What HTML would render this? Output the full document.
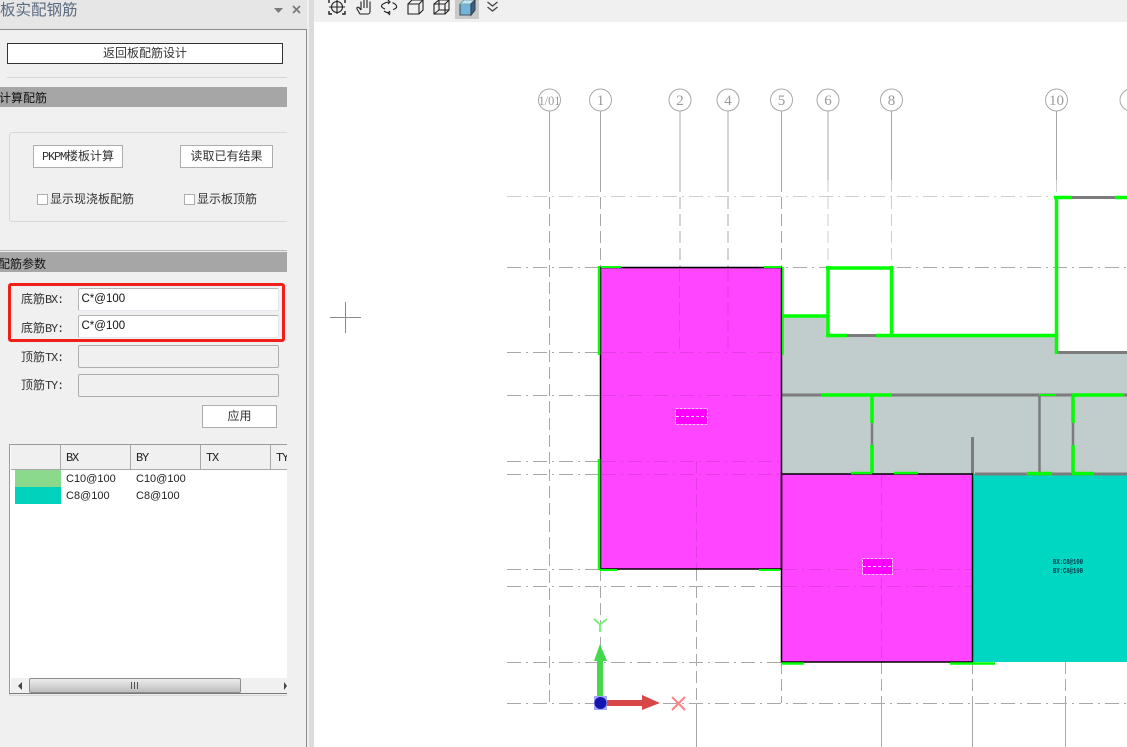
<!DOCTYPE html>
<html><head><meta charset="utf-8">
<style>
html,body{margin:0;padding:0;width:1127px;height:747px;overflow:hidden;background:#fff}
body{position:relative;font-family:"Liberation Sans","Noto Sans CJK SC",sans-serif;font-size:12px;color:#333}
.a{position:absolute;box-sizing:border-box}
.m{font-family:"Liberation Mono",monospace;font-size:12px;letter-spacing:-1.2px}
.t{white-space:nowrap;line-height:16px}
.btn{background:#fff;border:1px solid #adadad;text-align:center;white-space:nowrap}
.bar{left:0;width:287px;height:20px;background:#a6a6a6;color:#111;line-height:22px;white-space:nowrap;overflow:hidden}
.inp{left:78px;width:201px;height:23px;border:1px solid #b5b5b5;border-bottom-color:#e2e6ee;border-right-color:#e2e6ee;border-radius:2px;background:#fff;font-size:11.5px;line-height:20px;padding-left:2.500px;color:#111}
.dis{background:#f0f0f0;border:1px solid #adadad;border-radius:2px}
.cb{width:11px;height:11px;border:1px solid #adadad;background:#fff}
.th{top:445px;height:24px;line-height:27px;border-right:1px solid #a8a8a8;padding-left:5px;color:#222}
.td{font-size:11px;color:#222;white-space:nowrap;line-height:16px}
</style></head><body>

<div class="a" style="left:0;top:0;width:307px;height:747px;background:#f0f0f0"></div>
<div class="a" style="left:0;top:0;width:307px;height:29px;background:#e6e6e6"></div>
<div class="a" style="left:0;top:29px;width:307px;height:1px;background:#8c8c8c"></div>
<div class="a" style="left:306px;top:29px;width:1px;height:718px;background:#8c8c8c"></div>
<div class="a" style="left:307px;top:0;width:2px;height:747px;background:#f0f0f0"></div>
<div class="a" style="left:309px;top:0;width:5px;height:747px;background:#dcdcdc"></div>
<div class="a t" style="left:0;top:1px;font-size:15.500px;line-height:20px;color:#5a6b80">板实配钢筋</div>
<svg class="a" style="left:270px;top:3px" width="36" height="14">
<path d="M4 5h9l-4.500 5z" fill="#7a7a7a"/>
<path d="M23 3l7 7M30 3l-7 7" stroke="#777" stroke-width="1.600" fill="none"/>
</svg>

<div class="a" style="left:7px;top:43px;width:276px;height:21px;background:#fff;border:1px solid #333;text-align:center;line-height:19px;color:#333">返回板配筋设计</div>
<div class="a" style="left:7px;top:77px;width:280px;height:1px;background:#d6d6d6"></div>
<div class="a bar" style="top:87px;text-indent:-1px">计算配筋</div>

<div class="a" style="left:9px;top:132px;width:278px;height:90px;border:1px solid #d8d8d8;border-right:none;border-radius:3px 0 0 3px"></div>
<div class="a btn" style="left:33px;top:145px;width:90px;height:23px;line-height:20px"><span class="m">PKPM</span>楼板计算</div>
<div class="a btn" style="left:180px;top:145px;width:93px;height:23px;line-height:20px">读取已有结果</div>
<div class="a cb" style="left:37px;top:194px"></div>
<div class="a t" style="left:50px;top:191px">显示现浇板配筋</div>
<div class="a cb" style="left:184px;top:194px"></div>
<div class="a t" style="left:197px;top:191px">显示板顶筋</div>

<div class="a" style="left:0;top:250px;width:287px;height:1px;background:#b8b8b8"></div>
<div class="a bar" style="top:252px;text-indent:-2px;line-height:24px">配筋参数</div>

<div class="a t" style="left:21px;top:291px">底筋<span class="m">BX:</span></div>
<div class="a inp" style="top:288px">C*@100</div>
<div class="a t" style="left:21px;top:320px">底筋<span class="m">BY:</span></div>
<div class="a inp" style="top:315px">C*@100</div>
<div class="a" style="left:8px;top:283px;width:277px;height:59px;border:3px solid #f11f1a;border-radius:3px"></div>
<div class="a t" style="left:21px;top:349px">顶筋<span class="m">TX:</span></div>
<div class="a dis" style="left:78px;top:345px;width:201px;height:23px"></div>
<div class="a t" style="left:21px;top:377px">顶筋<span class="m">TY:</span></div>
<div class="a dis" style="left:78px;top:374px;width:201px;height:23px"></div>
<div class="a btn" style="left:202px;top:405px;width:75px;height:23px;line-height:20px">应用</div>

<!-- table -->
<div class="a" style="left:9px;top:444px;width:278px;height:250px;background:#fff;border:1px solid #9a9a9a;border-right:none;border-bottom:1px solid #777;overflow:hidden"></div>
<div class="a" style="left:9px;top:694px;width:278px;height:2px;border-bottom:1px solid #d8d8d8;border-left:1px solid #d8d8d8;border-radius:0 0 0 3px"></div>
<div class="a" style="left:11px;top:445px;width:276px;height:24px;background:#f0f0f0"></div>
<div class="a" style="left:11px;top:469px;width:276px;height:1px;background:#a8a8a8"></div>
<div class="a th" style="left:11px;width:50px"></div>
<div class="a th m" style="left:61px;width:70px">BX</div>
<div class="a th m" style="left:131px;width:70px">BY</div>
<div class="a th m" style="left:201px;width:70px">TX</div>
<div class="a m" style="left:276px;top:445px;line-height:27px;color:#222;width:11px;overflow:hidden">TY</div>
<div class="a" style="left:15px;top:470px;width:46px;height:17px;background:#8bd98d"></div>
<div class="a" style="left:15px;top:487px;width:46px;height:17px;background:#00d2bc"></div>
<div class="a td" style="left:66px;top:471px">C10@100</div>
<div class="a td" style="left:136px;top:471px">C10@100</div>
<div class="a td" style="left:66px;top:488px">C8@100</div>
<div class="a td" style="left:136px;top:488px">C8@100</div>
<!-- scrollbar -->
<div class="a" style="left:11px;top:678px;width:276px;height:15px;background:#f0f0f0"></div>
<div class="a" style="left:29px;top:678px;width:212px;height:15px;border:1px solid #8f8f8f;border-radius:2px;background:linear-gradient(#ececec,#d8d8d8 45%,#bdbdbd)"></div>
<svg class="a" style="left:11px;top:678px" width="276" height="15">
<path d="M7 8l4-4v8z" fill="#444"/>
<path d="M273 4l3 4-3 4z" fill="#444"/>
<path d="M120.500 4v7M123.500 4v7M126.500 4v7" stroke="#555" stroke-width="1" fill="none"/>
</svg>

<!-- toolbar -->
<div class="a" style="left:314px;top:0;width:813px;height:22px;background:#f0f0f0"></div>
<div class="a" style="left:455px;top:0;width:24px;height:19px;background:#c9c9c9"></div>
<svg class="a" style="left:314px;top:0" width="200" height="22" fill="none" stroke="#222" stroke-width="1.100">
<!-- fit -->
<circle cx="23" cy="7" r="5.500"/><path d="M23 0v14M15 7h16"/>
<path d="M15 3V0M31 3V0M15 11v3h3M31 11v3h-3" stroke-width="1.400"/>
<!-- hand -->
<path d="M43 9l3 5h8c1 0 2-1 2-2.500V3M47 10V1.500M50 8V0M53 8V0M56 8V1.500M47 10l-2-2.500c-1-.8-2.500-.2-2 1.500"/>
<!-- rotate -->
<path d="M71 9c-4-1.500-5-3.500-1-5.500 1.500-1 3.500-1.500 5-1.500M79 9.500c4-1 4.500-3 2.500-5-1-1-2-1.500-3-1.800M70 11c2 1.500 4 2 6.500 2M74 0l2 2-2 2M76 11l-2 2 2 2"/>
<!-- cube -->
<path d="M94 4h11v10H94zM94 4l4-4h11v10l-4 4M105 4l4-4"/>
<!-- wire -->
<path d="M120 4h11v10h-11zM120 4l5-4h10v10l-4 4M131 4l4-4M125 0v10h10M125 10l-5 4"/>
<!-- shaded -->
<path d="M146 4h11v11h-11z" fill="#74b4d8" stroke="#456"/>
<path d="M146 4l4-4h11l-4 4z" fill="#c6e6f4" stroke="#7aa"/>
<path d="M157 4l4-4v10l-4 5z" fill="#3a5f80" stroke="#345"/>
<!-- chevrons -->
<path d="M173.500 2l5 4 5-4M173.500 7l5 4 5-4" stroke="#444" stroke-width="1.300"/>
</svg>

<!-- canvas -->
<svg class="a" style="left:314px;top:22px;overflow:hidden" width="813" height="725" viewBox="314 22 813 725">
<g stroke="#a8a8a8" stroke-width="1" fill="none">
  <path stroke="#cfcfcf" stroke-dasharray="14 5 2 5" d="M507 196.500H1127"/>
  <g stroke-dasharray="14 5 2 5">
    <path d="M507 267.500H1127M507 352.500H600M507 395.500H600M507 461.500H600M507 474.500H600M507 569.500H600M507 586.500H781M507 662.500H781M507 703.500H1127"/>
  </g>
  <path d="M549.500 111V180M600.500 111V180M680 111V180M728 111V180M781.500 111V180M828 111V180M891.500 111V180M1056.500 111V180"/>
  <g stroke-dasharray="12 5">
    <path d="M549.500 180V703M600.500 180V267M600.500 569V703M680 180V267M728 180V267M781.500 180V267M781.500 662V703M696.500 569V703"/>
    <path stroke="#cfcfcf" d="M828 180V267M891.500 180V267M1056.500 180V197"/>
    <path d="M881.500 662V703M972.500 662V703M1065.500 662V703"/>
  </g>
  <path d="M696.500 703V747M881.500 703V747M972.500 703V747M1065.500 703V747"/>
  <g>
    <circle cx="549.500" cy="100" r="11"/><circle cx="600.500" cy="100" r="11"/><circle cx="680" cy="100" r="11"/><circle cx="728" cy="100" r="11"/><circle cx="781.500" cy="100" r="11"/><circle cx="828" cy="100" r="11"/><circle cx="891.500" cy="100" r="11"/><circle cx="1056.500" cy="100" r="11"/><circle cx="1131" cy="100" r="11"/>
  </g>
</g>
<g font-family="'Liberation Serif',serif" font-size="15" fill="#9a9a9a" text-anchor="middle">
  <text x="549.500" y="105" font-size="13" textLength="22" lengthAdjust="spacingAndGlyphs">1/01</text>
  <text x="600.500" y="105">1</text><text x="680" y="105">2</text><text x="728" y="105">4</text><text x="781.500" y="105">5</text><text x="828" y="105">6</text><text x="891.500" y="105">8</text><text x="1056.500" y="105">10</text>
</g>

<!-- fills -->
<path d="M782 316H828V335H1056V352H1127V474H782Z" fill="#c0cdcc"/>
<rect x="600" y="267" width="181.500" height="302" fill="#ff45ff"/>
<rect x="781.500" y="474" width="191" height="188" fill="#ff45ff"/>
<rect x="973" y="474" width="154" height="188" fill="#00d7c3"/>

<!-- lines on magenta -->
<g stroke="#e23ce2" fill="none">
  <path stroke-dasharray="14 5 2 5" d="M602 352.500H780M602 395.500H780M602 461.500H780M602 474.500H780M783 569.500H971M783 586.500H971"/>
  <path stroke-dasharray="12 5" d="M679.500 269V352M728 269V352M696.500 461V569M881.500 476V660"/>
</g>

<!-- gray walls -->
<g stroke="#7c7c7c" stroke-width="3" fill="none">
  <path d="M1072 197.500H1115M1056 352.500H1127M847 335.500H877M782 395H821M892 395H1127M972.500 437V474M975 474H1127"/>
  <path d="M1039.500 395V474" stroke-width="2.500"/>
  <path d="M872 423V445M1073 423V445" stroke-width="2.500"/>
  <path d="M601 268H781" stroke-width="1" stroke="#9a5a9a"/>
</g>

<!-- black outlines -->
<rect x="600.500" y="267.500" width="181" height="301.500" fill="none" stroke="#000" stroke-width="1.500"/>
<rect x="781.500" y="474" width="191" height="188" fill="none" stroke="#000" stroke-width="1.500"/>

<!-- green -->
<g stroke="#00ff00" stroke-width="4" fill="none">
  <path d="M1056.500 196V354M1054 197.500H1072M1115 197.500H1127M876 335.500H1058M891.500 266V336M826 268H893M828 266V336M826 335.500H847M782 316H828M821 395H892M1072 395H1124" stroke-width="3.500"/>
  <path d="M782.800 267V355" stroke-width="2"/>
  <path d="M1039 395H1056" stroke-width="2"/>
  <path d="M872 395V423M872 445V473M1073 395V423M1073 445V473" stroke-width="3.500"/>
  <path d="M851 473H872M894 473H918" stroke-width="2.500"/>
  <path d="M1027 473.500H1052M1072 473.500H1094" stroke-width="3.500"/>
  <path d="M599 266V355M599 459V570" stroke-width="2.500"/>
  <path d="M601 267H621M764 267H781" stroke-width="2"/>
  <path d="M600 570H617M759 570H780" stroke-width="2"/>
  <path d="M781 663.500H804M950 663.500H995" stroke-width="2.500"/>
</g>

<!-- labels -->
<rect x="675.500" y="408.500" width="32" height="16" fill="#ff00ff" stroke="#ffc8ff" stroke-dasharray="3 1"/>
<path d="M676 416.500H707" stroke="#ffc8ff" stroke-dasharray="3 2" fill="none"/>
<rect x="862.500" y="558.500" width="30" height="16" fill="#ff00ff" stroke="#ffc8ff" stroke-dasharray="3 1"/>
<path d="M863 566.500H892" stroke="#ffc8ff" stroke-dasharray="3 2" fill="none"/>
<g font-family="'Liberation Mono',monospace" font-size="7.500" fill="#034" font-weight="bold">
  <text x="1053" y="564" textLength="30" lengthAdjust="spacingAndGlyphs">BX:C8@100</text>
  <text x="1053" y="573" textLength="30" lengthAdjust="spacingAndGlyphs">BY:C8@100</text>
</g>

<!-- UCS -->
<path d="M597 703V660H603V703Z" fill="#46d84c"/>
<path d="M594 661L600 644L607 661Z" fill="#46d84c"/>
<path d="M604 700H644V706H604Z" fill="#d84848"/>
<path d="M642 695L660 703L642 710Z" fill="#d84848"/>
<rect x="594" y="696" width="13" height="14" fill="#a4a4f4"/>
<circle cx="600.500" cy="703" r="6" fill="#1414b0"/>
<path d="M594 619L600 624.500L607 619M600 624.500V632" stroke="#7af07e" stroke-width="2" fill="none"/>
<path d="M672 697L685 710M685 697L672 710" stroke="#ff8080" stroke-width="2" fill="none"/>

<!-- crosshair -->
<path d="M330 317.500H361M345.500 302V333" stroke="#8a8a8a" stroke-width="1" fill="none"/>
</svg>

</body></html>
